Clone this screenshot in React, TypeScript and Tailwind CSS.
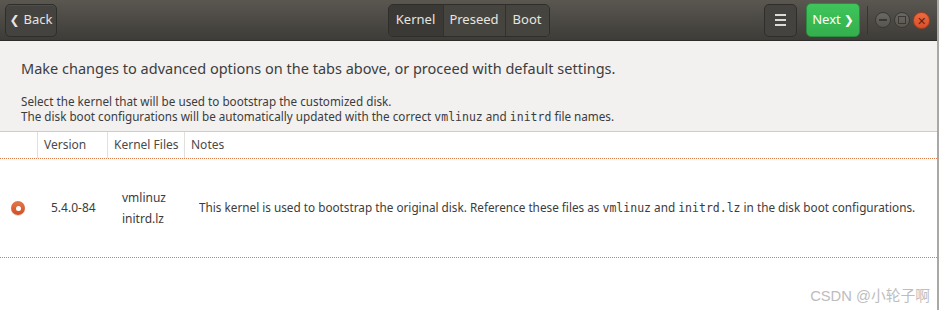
import React, { useState } from "react";

const tabs = ["Kernel", "Preseed", "Boot"];

function HeaderBar() {
  const [tab, setTab] = useState("Kernel");
  return (
    <div className="flex h-[41px] items-center border-b border-[#2d2c29] bg-gradient-to-b from-[#5a5751] to-[#3e3c38] px-[5px] text-[13px] text-[#e6e4e0]">
      <div className="flex flex-1">
        <button className="flex h-[33px] w-[52px] items-center justify-center gap-1 rounded-[5px] border border-[#2f2e2b] bg-[#45433f] shadow-[inset_0_1px_0_rgba(255,255,255,0.06)]">
          <span className="text-[12px]">❮</span>
          <span>Back</span>
        </button>
      </div>
      <div className="flex h-[33px] overflow-hidden rounded-[5px] border border-[#2f2e2b] bg-[#46443f]">
        {tabs.map((t, i) => (
          <button
            key={t}
            onClick={() => setTab(t)}
            className={
              (tab === t ? "bg-[#3a3935] " : "bg-[#46443f] ") +
              (i > 0 ? "border-l border-[#32312d] " : "") +
              (t === "Kernel" ? "w-[54px]" : t === "Preseed" ? "w-[62px]" : "w-[44px]")
            }
          >
            {t}
          </button>
        ))}
      </div>
      <div className="flex flex-1 items-center justify-end">
        <button className="flex h-[33px] w-[33px] flex-col items-center justify-center gap-[3px] rounded-[5px] border border-[#2f2e2b] bg-[#45433f]">
          <span className="h-[2px] w-[11px] bg-[#dcdad5]" />
          <span className="h-[2px] w-[11px] bg-[#dcdad5]" />
          <span className="h-[2px] w-[11px] bg-[#dcdad5]" />
        </button>
        <button className="ml-[9px] flex h-[34px] w-[54px] items-center justify-center gap-[3px] rounded-[5px] border border-[#2a8c3e] bg-gradient-to-b from-[#3ec55a] to-[#34af4e] text-white">
          <span>Next</span>
          <span className="text-[12px]">❯</span>
        </button>
        <div className="mx-[7px] h-[28px] w-px bg-[#35342f]" />
        <div className="flex gap-[3px] pr-[2px]">
          <span className="flex h-[16px] w-[16px] items-center justify-center rounded-full border border-[#3a3834] bg-gradient-to-b from-[#6a6862] to-[#58564f]">
            <span className="h-[2px] w-[8px] bg-[#3a3834]" />
          </span>
          <span className="flex h-[16px] w-[16px] items-center justify-center rounded-full border border-[#3a3834] bg-gradient-to-b from-[#6a6862] to-[#58564f]">
            <span className="h-[8px] w-[8px] border-[1.5px] border-[#3a3834]" />
          </span>
          <span className="flex h-[17px] w-[17px] items-center justify-center rounded-full border border-[#a93f1f] bg-gradient-to-b from-[#ee6a3f] to-[#d9502a] text-[11px] leading-none text-[#5a2412]">
            ✕
          </span>
        </div>
      </div>
    </div>
  );
}

const mono = "font-['DejaVu_Sans_Mono',monospace] text-[11.5px]";

export default function App() {
  return (
    <div className="h-[310px] w-[939px] overflow-hidden bg-white font-['Noto_Sans','DejaVu_Sans',sans-serif] text-[#3c3c3c]">
      <div className="flex h-full border-r-2 border-[#a9a8a4]">
        <div className="flex flex-1 flex-col">
          <HeaderBar />
          <div className="bg-[#f2f1f0] px-[21px] pb-[6px] pt-[17px]">
            <p className="text-[14.5px] leading-[20px] text-[#3d3d3d]">
              Make changes to advanced options on the tabs above, or proceed with default settings.
            </p>
            <p className="mt-[16px] text-[11.7px] leading-[15px]">
              Select the kernel that will be used to bootstrap the customized disk.
            </p>
            <p className="text-[11.7px] leading-[15px]">
              The disk boot configurations will be automatically updated with the correct{" "}
              <span className={mono}>vmlinuz</span> and <span className={mono}>initrd</span> file names.
            </p>
          </div>
          <div className="border-t border-[#cfcdca] text-[12px]">
            <div className="flex h-[27px] items-center border-b border-dotted border-[#e07a4a] text-[#4a4a4a]">
              <div className="h-full w-[38px] border-r border-[#e2e0dd]" />
              <div className="flex h-full w-[70px] items-center border-r border-[#e2e0dd] pl-[6px]">Version</div>
              <div className="flex h-full w-[77px] items-center border-r border-[#e2e0dd] pl-[6px]">Kernel Files</div>
              <div className="flex h-full flex-1 items-center pl-[6px]">Notes</div>
            </div>
            <div className="flex h-[99px] items-center border-b border-dotted border-[#e07a4a]">
              <div className="flex w-[38px] justify-center pr-[2px]">
                <span className="flex h-[14px] w-[14px] items-center justify-center rounded-full bg-gradient-to-b from-[#e8774a] to-[#cf4f22] shadow-[0_1px_0_rgba(0,0,0,0.15)]">
                  <span className="h-[5px] w-[5px] rounded-full bg-white" />
                </span>
              </div>
              <div className="w-[70px] pl-[13px]">5.4.0-84</div>
              <div className="w-[77px] pl-[14px] leading-[21px]">
                <div>vmlinuz</div>
                <div>initrd.lz</div>
              </div>
              <div className="flex-1 whitespace-nowrap pl-[14px] text-[11.75px]">
                This kernel is used to bootstrap the original disk. Reference these files as{" "}
                <span className={mono}>vmlinuz</span> and <span className={mono}>initrd.lz</span> in the disk boot configurations.
              </div>
            </div>
            <div className="flex justify-end pr-[7px] pt-[27px]">
              <span className="font-['Liberation_Sans','Noto_Sans_CJK_SC',sans-serif] text-[14.75px] text-[#bdbdbd]">
                CSDN @小轮子啊
              </span>
            </div>
          </div>
        </div>
      </div>
    </div>
  );
}
